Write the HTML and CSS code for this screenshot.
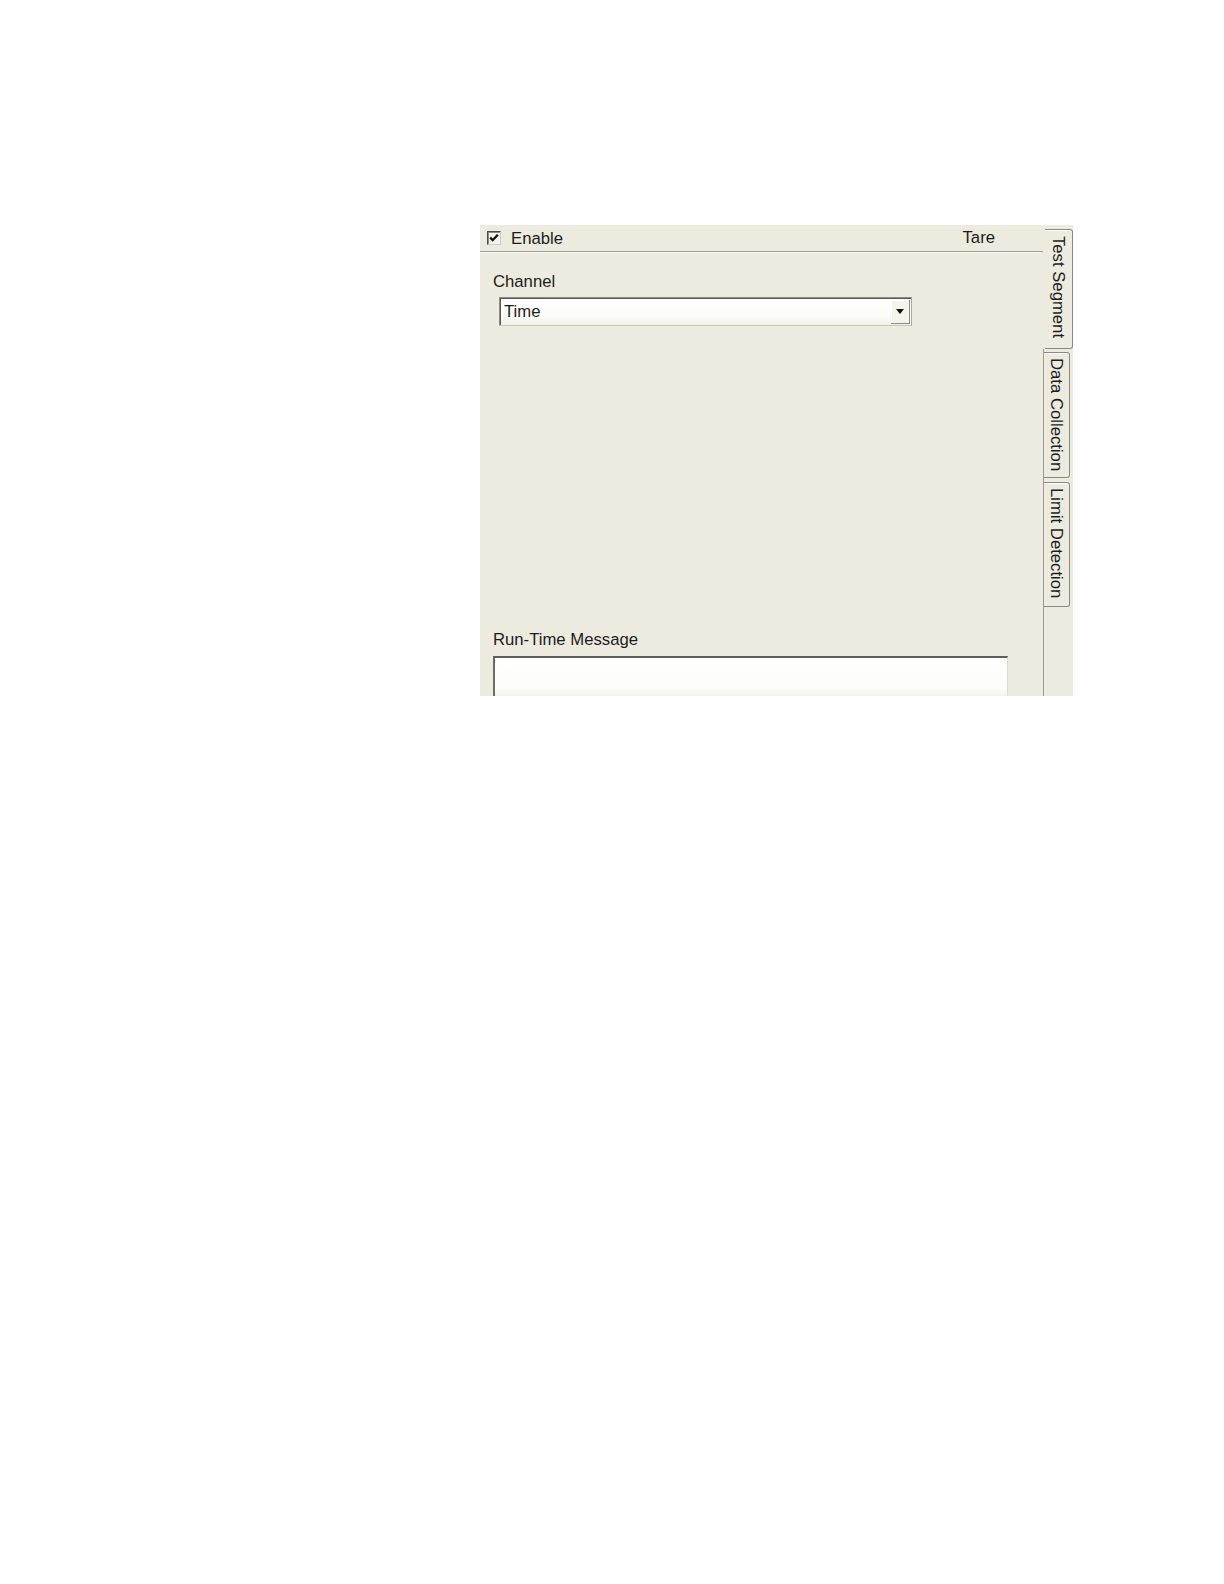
FILE: index.html
```html
<!DOCTYPE html>
<html>
<head>
<meta charset="utf-8">
<title>Test Segment</title>
<link rel="stylesheet" href="styles.css">
</head>
<body>
<div class="page">
  <div class="panel">
    <div class="main">
      <div class="header">
        <span class="checkbox">
          <svg width="12" height="12" viewBox="0 0 12 12"><path d="M2.2 5.6 L4.7 8.2 L9.8 2.8" fill="none" stroke="#111" stroke-width="2.3"/></svg>
        </span>
        <span class="label enable">Enable</span>
        <span class="spacer"></span>
        <span class="label tare">Tare</span>
      </div>
      <div class="label channel">Channel</div>
      <div class="combo">
        <span class="combo-value">Time</span>
        <span class="combo-btn">
          <svg width="8" height="5" viewBox="0 0 8 5"><path d="M0 0 H8 L4 5 Z" fill="#111"/></svg>
        </span>
      </div>
      <div class="fill"></div>
      <div class="label runtime">Run-Time Message</div>
      <div class="textbox"></div>
    </div>
    <div class="tabs">
      <div class="tab selected"><span>Test Segment</span></div>
      <div class="slot"><div class="tab"><span>Data Collection</span></div></div>
      <div class="slot slot-wide"><div class="tab"><span>Limit Detection</span></div></div>
      <div class="tab-fill"></div>
    </div>
  </div>
</div>
</body>
</html>
```
FILE: styles.css
```css
html, body {
  margin: 0;
  padding: 0;
  background: #ffffff;
}

.page {
  padding: 225px 0 0 480px;
  font-family: "Liberation Sans", Arial, sans-serif;
  font-size: 16.7px;
  line-height: 19px;
  color: #1c1c1c;
}

.panel {
  width: 593px;
  height: 471px;
  display: flex;
  background: #edebdf;
  overflow: hidden;
}

.main {
  width: 563px;
  display: flex;
  flex-direction: column;
}

.header {
  height: 26px;
  display: flex;
  align-items: center;
  padding: 0 48px 0 7px;
  border-bottom: 1px solid #a3a299;
  box-shadow: 0 1px 0 #fbfaf5;
}

.checkbox {
  width: 12px;
  height: 12px;
  border: 1px solid #4a4a4a;
  border-right-color: #cfcdc2;
  border-bottom-color: #cfcdc2;
  box-shadow: inset 1px 1px 0 #8c8b84;
  background: #f4f3ee;
  display: flex;
  align-items: center;
  justify-content: center;
}

.enable {
  margin-left: 10px;
}

.spacer {
  flex: 1;
}

.tare {
  position: relative;
  top: -1px;
}

.channel {
  margin: 20px 0 0 13px;
}

.combo {
  margin: 6px 0 0 19px;
  width: 411px;
  height: 27px;
  display: flex;
  align-items: center;
  background: linear-gradient(#ffffff, #fbfbf7 70%, #f1f0e8);
  border: 1px solid #8a8a84;
  border-right-color: #a9a89f;
  border-bottom-color: #c9c8bd;
  box-shadow: inset 1px 1px 0 #5a5a57;
}

.combo-value {
  flex: 1;
  padding-left: 4px;
}

.combo-btn {
  width: 18px;
  height: 23px;
  margin-right: 1px;
  display: flex;
  align-items: center;
  justify-content: center;
  background: #f4f3ec;
  border-right: 1px solid #8d8c85;
  border-bottom: 1px solid #8d8c85;
  box-shadow: inset 1px 1px 0 #ffffff;
}

.fill {
  flex: 1;
}

.runtime {
  margin-left: 13px;
}

.textbox {
  margin: 7px 0 0 13px;
  width: 512px;
  height: 38px;
  background: linear-gradient(#ffffff, #fcfcf9 80%, #f3f2ea);
  border-top: 2px solid #5c5c58;
  border-left: 2px solid #6a6a66;
  border-right: 1px solid #dcdbd0;
}

.tabs {
  width: 30px;
  display: flex;
  flex-direction: column;
  padding-top: 4px;
  box-sizing: border-box;
}

.tab {
  display: flex;
  justify-content: center;
  box-sizing: border-box;
  border: 1px solid #8b8a82;
  border-left: none;
  border-radius: 0 3px 3px 0;
  box-shadow: inset 0 1px 0 #ffffff;
}

.tab span {
  writing-mode: vertical-rl;
  padding-top: 5px;
}

.tab.selected {
  height: 120px;
  margin-left: 2px;
  width: 28px;
}

.tab.selected span {
  padding-top: 6px;
}

.slot {
  border-left: 1px solid #9c9b93;
  padding-top: 3px;
}

.slot .tab {
  width: 26px;
  height: 126px;
}

.slot-wide {
  padding-top: 4px;
}

.slot-wide .tab {
  height: 125px;
}

.tab-fill {
  flex: 1;
  border-left: 1px solid #9c9b93;
}
```
